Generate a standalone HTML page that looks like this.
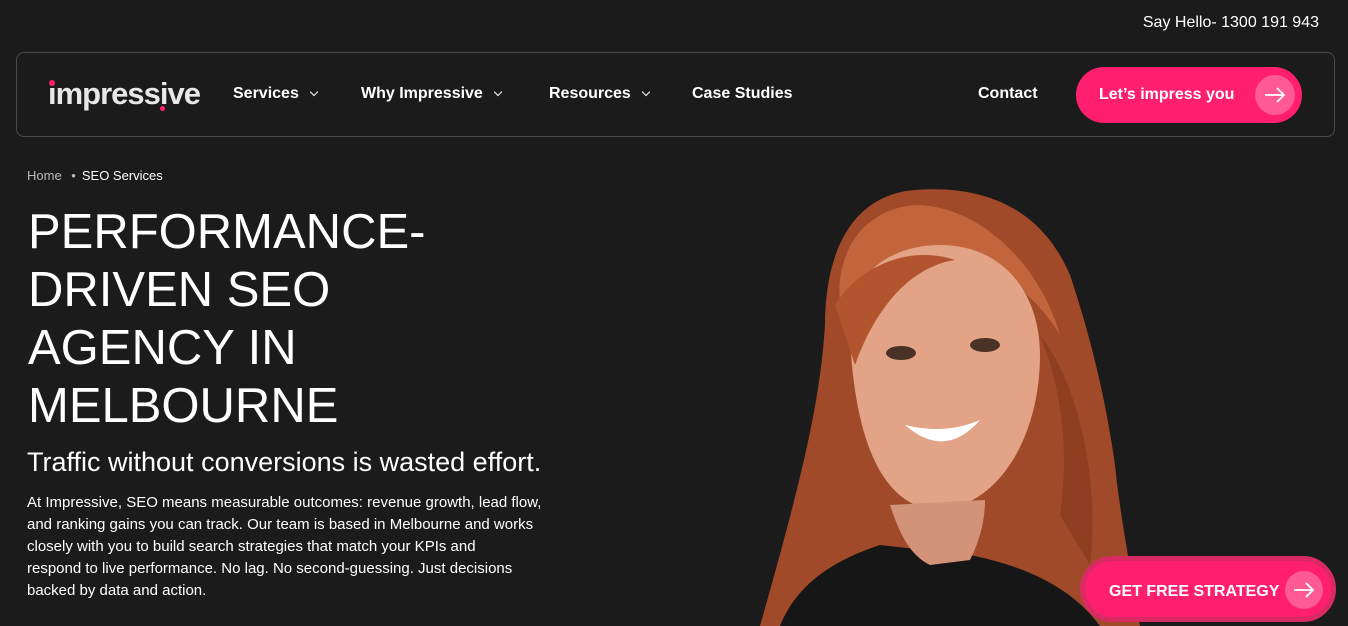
<!DOCTYPE html>
<html><head><meta charset="utf-8"><style>
*{margin:0;padding:0;box-sizing:border-box}
body{width:1348px;height:626px;overflow:hidden;background:#1b1b1b;font-family:"Liberation Sans",sans-serif;color:#fff;position:relative}
.abs{position:absolute}
.nav{left:16px;top:52px;width:1319px;height:85px;border:1px solid #4a4a4a;border-radius:8px}
.nl{top:85px;font-size:16px;font-weight:bold;white-space:nowrap}
.chev{display:inline-block;width:6px;height:6px;border-right:1.5px solid #fff;border-bottom:1.5px solid #fff;transform:rotate(45deg);margin-left:12px;position:relative;top:-3px}
.btn{background:#ff1f6e;border-radius:30px;color:#fff;font-weight:bold}
.circ{border-radius:50%;background:#ff5a93;display:flex;align-items:center;justify-content:center}
h1{left:28px;top:203px;font-size:49px;font-weight:normal;line-height:58px;letter-spacing:0}
p{font-size:15px;line-height:22px;white-space:nowrap}
</style></head><body>
<div class="abs" style="right:29px;top:14px;font-size:16px">Say Hello- 1300 191 943</div>
<div class="abs nav"></div>
<div class="abs" style="left:48px;top:76px;font-size:31px;font-weight:bold;color:#e8e8e8;letter-spacing:-1px">impressive</div>
<div class="abs" style="left:49px;top:80px;width:6px;height:6px;border-radius:50%;background:#ff1f6e"></div>
<div class="abs" style="left:160px;top:106px;width:5px;height:5px;border-radius:50%;background:#ff1f6e"></div>
<div class="abs nl" style="left:233px">Services<span class="chev"></span></div>
<div class="abs nl" style="left:361px">Why Impressive<span class="chev"></span></div>
<div class="abs nl" style="left:549px">Resources<span class="chev"></span></div>
<div class="abs nl" style="left:692px">Case Studies</div>
<div class="abs nl" style="left:978px">Contact</div>
<div class="abs btn" style="left:1076px;top:67px;width:226px;height:56px;font-size:16px;padding:19px 0 0 23px">Let’s impress you
<div class="abs circ" style="left:179px;top:8px;width:40px;height:40px"><svg width="22" height="16" viewBox="0 0 22 16"><path d="M1 8H20M13 1l7 7-7 7" stroke="#fff" stroke-width="1.8" fill="none"/></svg></div></div>
<div class="abs" style="left:27px;top:168px;font-size:13px;color:#bbb">Home <span style="margin:0 6px">•</span><span style="color:#fff">SEO Services</span></div>
<h1 class="abs">PERFORMANCE-<br>DRIVEN SEO<br>AGENCY IN<br>MELBOURNE</h1>
<div class="abs" style="left:27px;top:447px;font-size:27px;white-space:nowrap">Traffic without conversions is wasted effort.</div>
<p class="abs" style="left:27px;top:492px">At Impressive, SEO means measurable outcomes: revenue growth, lead flow,<br>and ranking gains you can track. Our team is based in Melbourne and works<br>closely with you to build search strategies that match your KPIs and<br>respond to live performance. No lag. No second-guessing. Just decisions<br>backed by data and action.</p>
<svg class="abs" style="left:740px;top:185px" width="420" height="441" viewBox="0 0 420 441">
<path d="M175 5C110 10 85 70 85 140C80 220 60 300 20 441H400C390 380 380 330 375 280C365 210 350 150 330 90C300 20 240 0 175 5Z" fill="#a14a2a"/>
<path d="M100 120C140 60 260 50 320 150C300 80 240 20 175 20C120 25 95 70 100 120Z" fill="#c2643c"/>
<path d="M40 441C60 390 110 370 140 360L230 370C280 380 330 400 360 441Z" fill="#161616"/>
<path d="M110 150C105 90 150 60 200 60C265 60 300 110 300 170C300 250 260 320 200 325C150 325 115 270 110 150Z" fill="#e2a386"/>
<path d="M150 320C160 350 170 370 190 380L230 375C240 355 245 335 245 315Z" fill="#d39378"/>
<ellipse cx="161" cy="168" rx="15" ry="7" fill="#4a3326"/>
<ellipse cx="245" cy="160" rx="15" ry="7" fill="#4a3326"/>
<path d="M165 240Q205 275 240 235Q205 250 165 240Z" fill="#fff"/>
<path d="M95 120C120 80 170 60 215 75C180 80 140 110 115 180Z" fill="#b2552f"/>
<path d="M300 150C320 200 330 260 320 330L350 380C360 300 340 200 300 150Z" fill="#8e3f22"/>
</svg>
<div class="abs btn" style="left:1080px;top:556px;width:256px;height:66px;border:5px solid #d92a64;border-radius:34px;font-size:16px;padding:22px 0 0 24px">GET FREE STRATEGY
<div class="abs circ" style="left:200px;top:10px;width:38px;height:38px"><svg width="22" height="16" viewBox="0 0 22 16"><path d="M1 8H20M13 1l7 7-7 7" stroke="#fff" stroke-width="1.8" fill="none"/></svg></div></div>
</body></html>
